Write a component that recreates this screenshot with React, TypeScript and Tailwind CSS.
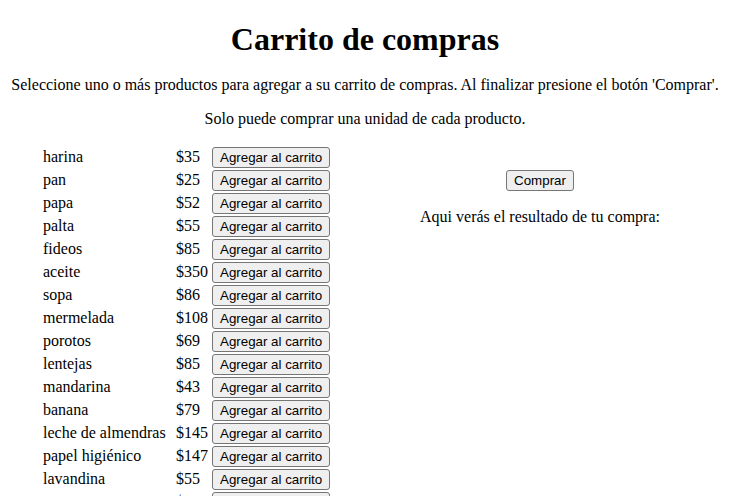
const productos = [
  { nombre: "harina", precio: 35 },
  { nombre: "pan", precio: 25 },
  { nombre: "papa", precio: 52 },
  { nombre: "palta", precio: 55 },
  { nombre: "fideos", precio: 85 },
  { nombre: "aceite", precio: 350 },
  { nombre: "sopa", precio: 86 },
  { nombre: "mermelada", precio: 108 },
  { nombre: "porotos", precio: 69 },
  { nombre: "lentejas", precio: 85 },
  { nombre: "mandarina", precio: 43 },
  { nombre: "banana", precio: 79 },
  { nombre: "leche de almendras", precio: 145 },
  { nombre: "papel higiénico", precio: 147 },
  { nombre: "lavandina", precio: 55 },
  { nombre: "arroz", precio: 48 },
];

const btn =
  "h-[21px] px-[7px] bg-[#efefef] border border-[#767676] rounded-[3px] text-[13.333px] leading-[15px] font-['Liberation_Sans',Arial,sans-serif] text-black";

export default function App() {
  return (
    <div className="min-h-screen bg-white text-black text-base font-['Liberation_Serif','Times_New_Roman',serif]">
      <h1 className="pt-[21px] text-[32px] leading-[37px] font-bold text-center">
        Carrito de compras
      </h1>
      <p className="mt-[18px] leading-[18px] text-center">
        Seleccione uno o más productos para agregar a su carrito de compras. Al finalizar presione el botón 'Comprar'.
      </p>
      <p className="mt-4 leading-[18px] text-center">
        Solo puede comprar una unidad de cada producto.
      </p>

      <div className="flex mt-[17px]">
        {/* Lista de productos */}
        <div className="w-[350px] pl-[43px]">
          {productos.map((p) => (
            <div key={p.nombre} className="grid grid-cols-[133px_36px_auto] items-center h-[23px]">
              <span className="leading-[18px]">{p.nombre}</span>
              <span className="leading-[18px]">${p.precio}</span>
              <span>
                <button className={btn}>Agregar al carrito</button>
              </span>
            </div>
          ))}
        </div>

        {/* Resultado */}
        <div className="flex-1 text-center pt-[23px]">
          <button className={btn}>Comprar</button>
          <p className="mt-[16px] leading-[18px]">Aqui verás el resultado de tu compra:</p>
        </div>
      </div>
    </div>
  );
}
